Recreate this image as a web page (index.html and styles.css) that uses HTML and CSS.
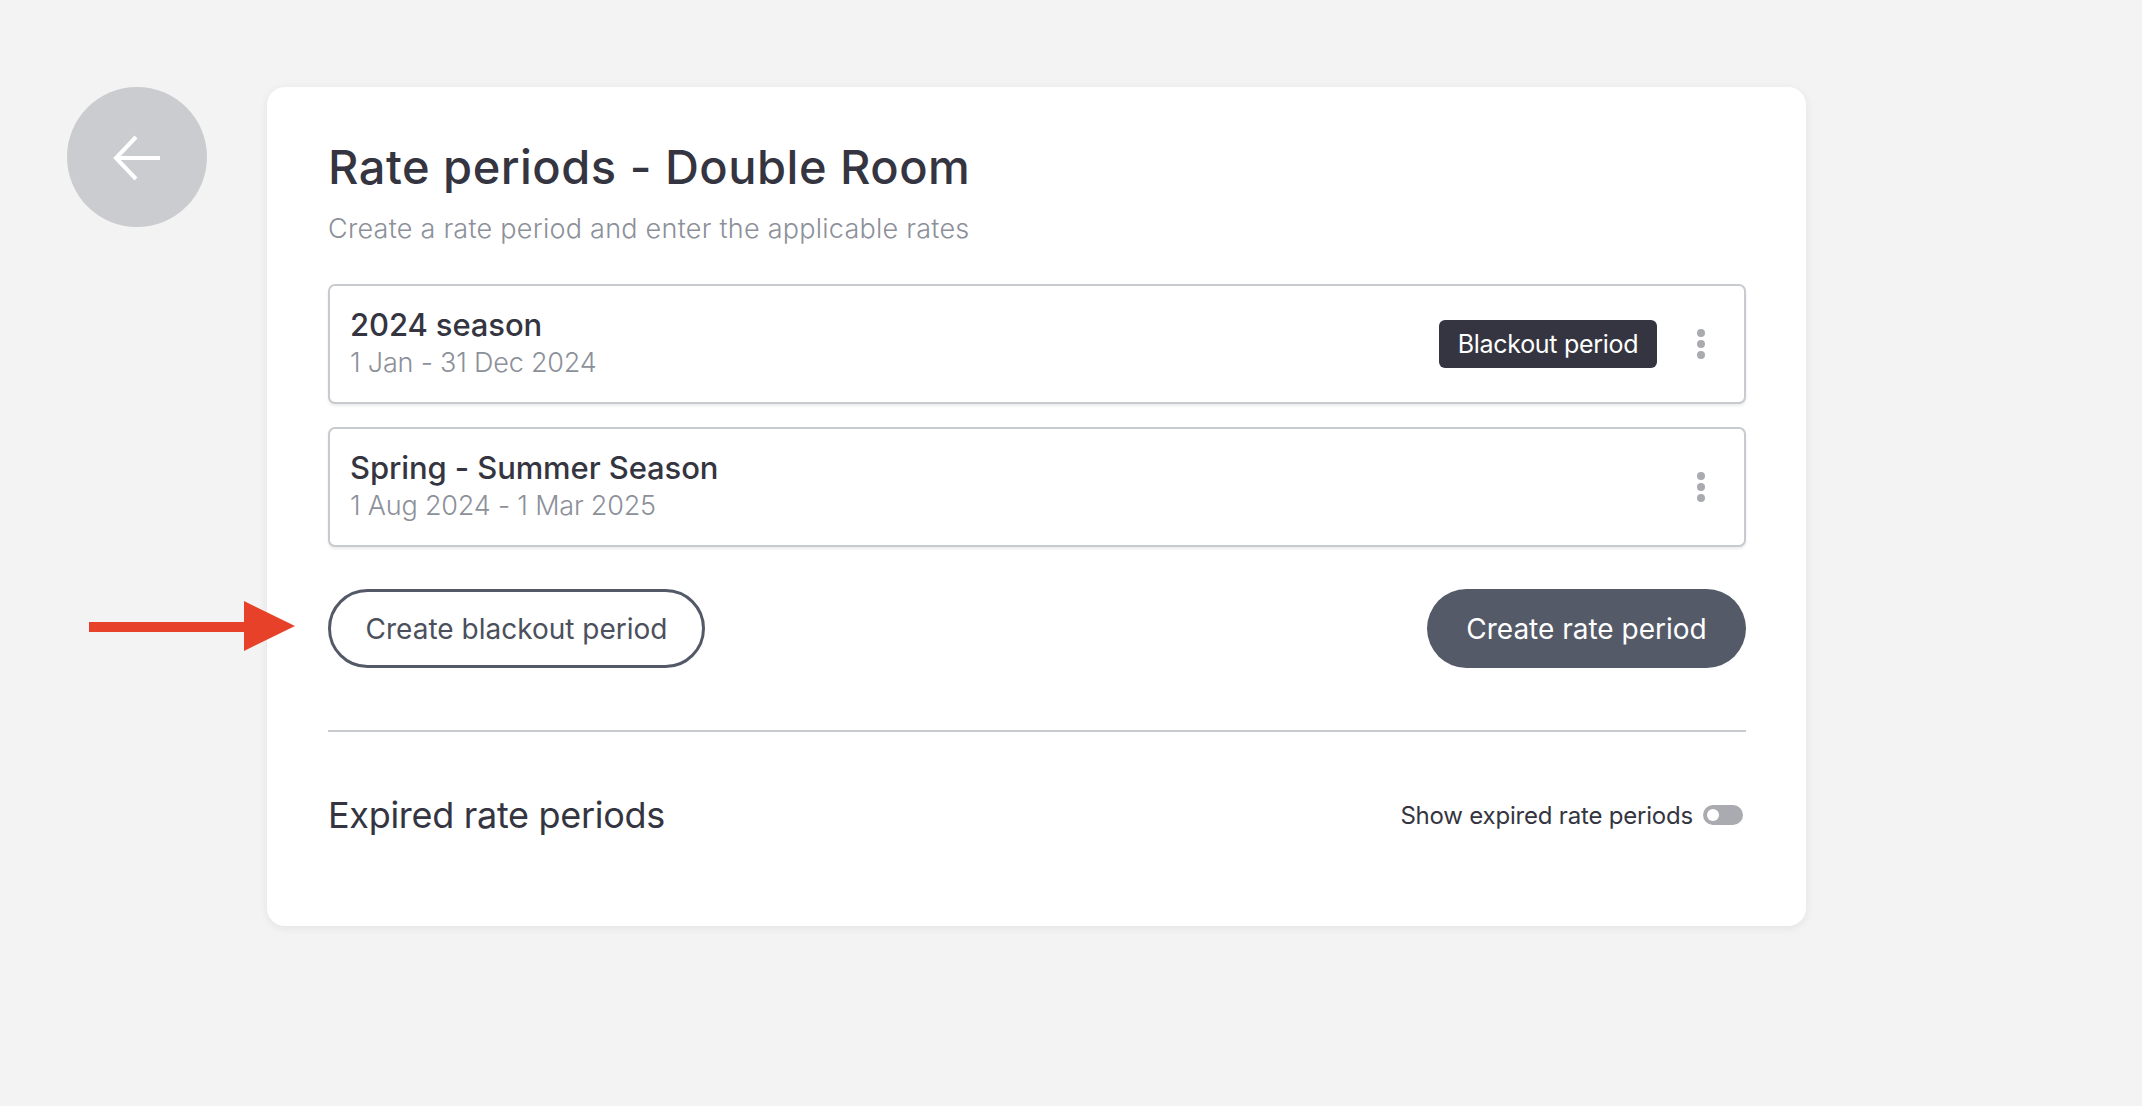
FILE: index.html
```html
<!DOCTYPE html>
<html lang="en">
<head>
<meta charset="utf-8">
<title>Rate periods - Double Room</title>
<link rel="stylesheet" href="styles.css">
</head>
<body>
<div class="page">
  <button class="back" aria-label="Back">
    <svg width="50" height="50" viewBox="0 0 50 50" fill="none" stroke="#ffffff" stroke-width="4" stroke-linecap="square">
      <path d="M47 26H6"/>
      <path d="M25 5L5 26L25 47" stroke-linecap="butt"/>
    </svg>
  </button>
  <main class="card">
    <h1 class="title">Rate periods - Double Room</h1>
    <p class="subtitle">Create a rate period and enter the applicable rates</p>

    <div class="periods">
      <div class="period">
        <div class="period-text">
          <div class="period-name">2024 season</div>
          <div class="period-dates">1 Jan - 31 Dec 2024</div>
        </div>
        <span class="badge">Blackout period</span>
        <span class="kebab"><i></i><i></i><i></i></span>
      </div>
      <div class="period">
        <div class="period-text">
          <div class="period-name">Spring - Summer Season</div>
          <div class="period-dates">1 Aug 2024 - 1 Mar 2025</div>
        </div>
        <span class="kebab"><i></i><i></i><i></i></span>
      </div>
    </div>

    <div class="actions">
      <button class="btn btn-outline">Create blackout period</button>
      <button class="btn btn-solid">Create rate period</button>
    </div>

    <hr class="divider">

    <div class="expired">
      <h2 class="expired-title">Expired rate periods</h2>
      <label class="toggle-label">Show expired rate periods <span class="toggle"><span class="knob"></span></span></label>
    </div>
  </main>
  <svg class="annot" width="210" height="54" viewBox="0 0 210 54">
    <rect x="0" y="21" width="160" height="10" fill="#e8412a"/>
    <path d="M155 0L206 25L155 50Z" fill="#e8412a"/>
  </svg>
</div>
</body>
</html>
```
FILE: styles.css
```css
* { box-sizing: border-box; }
html, body { margin: 0; padding: 0; }
body {
  background: #f3f3f3;
  font-family: "Inter", "Lato", "Liberation Sans", sans-serif;
  color: #343540;
  width: 2142px;
  height: 1106px;
  overflow: hidden;
}
.page {
  position: relative;
  display: flex;
  align-items: flex-start;
  gap: 60px;
  padding: 87px 0 0 67px;
}
.back {
  width: 140px;
  height: 140px;
  border-radius: 50%;
  background: #cbccd0;
  border: none;
  padding: 0;
  display: flex;
  align-items: center;
  justify-content: center;
  flex: none;
}
.back svg { margin-left: -2px; }
.card {
  width: 1539px;
  height: 839px;
  background: #ffffff;
  border-radius: 18px;
  box-shadow: 0 2px 10px rgba(0,0,0,0.07);
  padding: 52px 60px 0 61px;
  display: flex;
  flex-direction: column;
}
.title {
  margin: 0;
  font-size: 47px;
  font-weight: 500;
  line-height: 56px;
  color: #343540;
  letter-spacing: 0.5px;
}
.subtitle {
  margin: 16px 0 0;
  font-size: 27px;
  font-weight: 300;
  line-height: 36px;
  color: #8c9099;
  letter-spacing: 0.25px;
}
.periods {
  margin-top: 37px;
  display: flex;
  flex-direction: column;
  gap: 23px;
}
.period {
  display: flex;
  align-items: center;
  height: 120px;
  border: 2px solid #c7cacf;
  border-radius: 7px;
  box-shadow: 0 2px 3px rgba(0,0,0,0.08);
  padding: 0 39px 0 20px;
  background: #fff;
}
.period-text { flex: 1; }
.period-name {
  font-size: 31px;
  font-weight: 500;
  line-height: 38px;
  color: #343540;
  letter-spacing: -0.1px;
}
.period-dates {
  font-size: 27px;
  font-weight: 300;
  line-height: 38px;
  color: #8c9099;
  letter-spacing: -0.2px;
}
.badge {
  background: #343540;
  color: #fff;
  font-size: 25px;
  line-height: 48px;
  height: 48px;
  border-radius: 6px;
  margin-right: 40px;
  font-weight: 400;
  width: 218px;
  text-align: center;
  letter-spacing: -0.3px;
}
.kebab {
  display: flex;
  flex-direction: column;
  gap: 3px;
  width: 8px;
}
.kebab i {
  display: block;
  width: 8px;
  height: 8px;
  border-radius: 50%;
  background: #a9abb1;
}
.actions {
  margin-top: 42px;
  display: flex;
  justify-content: space-between;
}
.btn {
  height: 79px;
  border-radius: 40px;
  font-family: "Inter", "Lato", "Liberation Sans", sans-serif;
  font-size: 28px;
  font-weight: 400;
  letter-spacing: 0;
}
.btn-outline {
  width: 377px;
  background: #fff;
  border: 3px solid #535966;
  color: #4b505c;
}
.btn-solid {
  width: 319px;
  background: #545a68;
  border: none;
  color: #fff;
}
.divider {
  margin: 62px 0 0;
  border: none;
  height: 2px;
  background: #c7cacf;
}
.expired {
  margin-top: 61px;
  display: flex;
  align-items: center;
  justify-content: space-between;
  height: 44px;
}
.expired-title {
  margin: 0;
  font-size: 36px;
  font-weight: 400;
  line-height: 44px;
  color: #343540;
  letter-spacing: -0.3px;
}
.toggle-label {
  display: flex;
  align-items: center;
  gap: 10px;
  font-size: 24px;
  color: #343540;
  margin-right: 3px;
  letter-spacing: -0.2px;
}
.toggle {
  width: 40px;
  height: 20px;
  border-radius: 10px;
  background: #a9abb1;
  display: flex;
  align-items: center;
  padding-left: 4px;
}
.knob {
  width: 12px;
  height: 12px;
  border-radius: 50%;
  background: #fff;
}
.annot {
  position: absolute;
  left: 89px;
  top: 601px;
}
```
